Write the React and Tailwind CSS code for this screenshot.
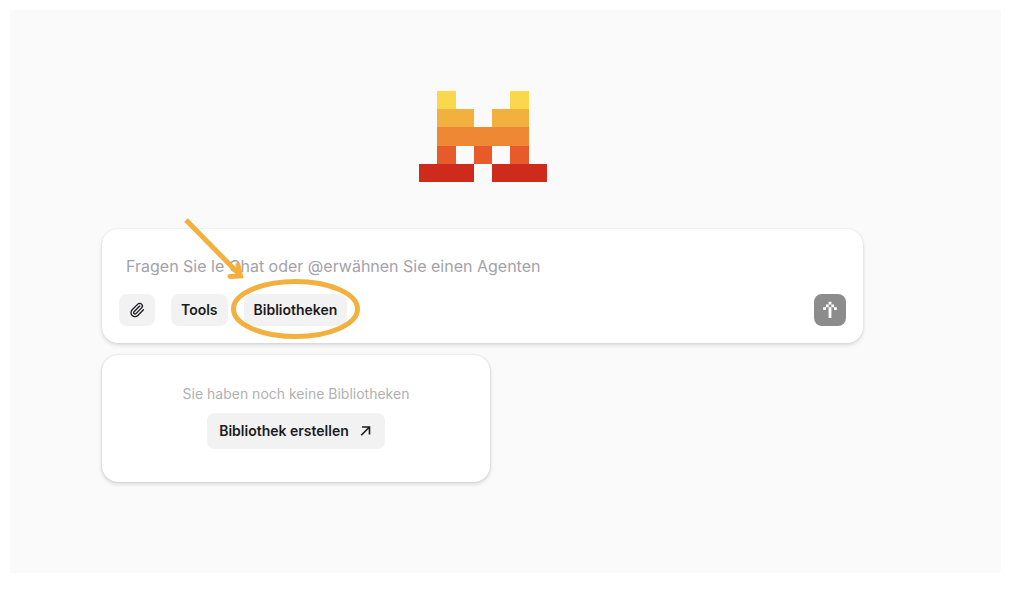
import { Paperclip } from "lucide-react";

const logoRows = [
  { color: "#f9d94b", cells: [[1, 1], [5, 1]] },
  { color: "#f2b13e", cells: [[1, 2], [4, 2]] },
  { color: "#ef8834", cells: [[1, 5]] },
  { color: "#e75b2b", cells: [[1, 1], [3, 1], [5, 1]] },
  { color: "#cf2b1c", cells: [[0, 3], [4, 3]] },
];

const Logo = () => (
  <svg viewBox="0 0 7 5" preserveAspectRatio="none" shapeRendering="crispEdges" className="w-32 h-[91px]" role="img" aria-label="Le Chat">
    {logoRows.map((row, y) =>
      row.cells.map(([x, width]) => (
        <rect key={`${x}-${y}`} x={x} y={y} width={width} height="1" fill={row.color} />
      ))
    )}
  </svg>
);

// Pixel-style arrow of the send button
const SendIcon = () => (
  <svg viewBox="0 0 14 18" fill="white" className="w-3.5 h-[18px]" aria-hidden="true">
    <rect x="5.6" y="0.8" width="2.8" height="2.8" />
    <rect x="2.9" y="3.5" width="2.8" height="2.8" />
    <rect x="8.3" y="3.5" width="2.8" height="2.8" />
    <rect x="0.2" y="6.2" width="2.8" height="2.8" />
    <rect x="11" y="6.2" width="2.8" height="2.8" />
    <rect x="5.6" y="6.2" width="2.8" height="10.8" />
  </svg>
);

const ExternalIcon = () => (
  <svg viewBox="0 0 16 16" fill="none" stroke="currentColor" strokeWidth="1.6" className="size-4" aria-hidden="true">
    <path d="M5 4 H12.5 V11.5 M12.5 4 L4.2 12.3" />
  </svg>
);

// Hand-drawn hint that points at the library button
const Highlight = () => (
  <svg
    viewBox="0 0 182 128"
    fill="none"
    stroke="#f2b13e"
    className="absolute -left-[63px] -top-[79px] w-[182px] h-32 max-w-none pointer-events-none"
    aria-hidden="true"
  >
    <ellipse cx="114.5" cy="94" rx="62" ry="27.5" strokeWidth="5" />
    <path d="M5 5 L59 60" strokeWidth="5" />
    <path d="M57 50 L59.5 61 L49 61.5" strokeWidth="5" strokeLinecap="round" strokeLinejoin="miter" />
  </svg>
);

const ToolButton = ({ className = "", children, ...props }) => (
  <button type="button" className={`rounded-lg bg-[#f2f2f2] text-sm font-semibold text-[#1b1b1f] ${className}`} {...props}>
    {children}
  </button>
);

const Composer = () => (
  <form className="rounded-2xl bg-white px-[17px] pt-6 pb-[17px] shadow-[0_0_2px_rgba(0,0,0,0.08),0_2px_4px_rgba(0,0,0,0.14)]">
    <input
      type="text"
      aria-label="Nachricht"
      placeholder="Fragen Sie le Chat oder @erwähnen Sie einen Agenten"
      className="block w-full h-[26px] px-[7px] text-base text-[#1b1b1f] placeholder:text-[#a3a2aa] outline-none"
    />
    <div className="mt-[15px] flex items-center gap-4">
      <ToolButton className="h-8 w-9 flex items-center justify-center" aria-label="Datei anhängen">
        <Paperclip size={16} />
      </ToolButton>
      <ToolButton className="h-8 px-2.5">Tools</ToolButton>
      <div className="relative">
        <ToolButton className="h-8 px-2.5">Bibliotheken</ToolButton>
        <Highlight />
      </div>
      <button type="submit" aria-label="Senden" className="ml-auto size-8 rounded-lg bg-[#8c8c8c] flex items-center justify-center">
        <SendIcon />
      </button>
    </div>
  </form>
);

const LibraryCard = () => (
  <section className="mt-3 w-full max-w-[388px] rounded-2xl bg-white pt-7 pb-[33px] flex flex-col items-center gap-2 shadow-[0_0_2px_rgba(0,0,0,0.16),0_2px_4px_rgba(0,0,0,0.14)]">
    <p className="text-sm leading-[22px] text-[#b1b1b1]">Sie haben noch keine Bibliotheken</p>
    <ToolButton className="h-9 px-3 flex items-center gap-2">
      Bibliothek erstellen
      <ExternalIcon />
    </ToolButton>
  </section>
);

export default function App() {
  return (
    <div className="min-h-screen bg-white pt-2.5 pb-[26px] pl-2.5 pr-[23px] font-['Inter',sans-serif] flex">
      <main className="flex-1 bg-[#fafafa] pt-[81px] pb-[91px] pl-[92px] pr-[138px]">
        <div className="flex justify-center mb-[47px]">
          <Logo />
        </div>
        <Composer />
        <LibraryCard />
      </main>
    </div>
  );
}
